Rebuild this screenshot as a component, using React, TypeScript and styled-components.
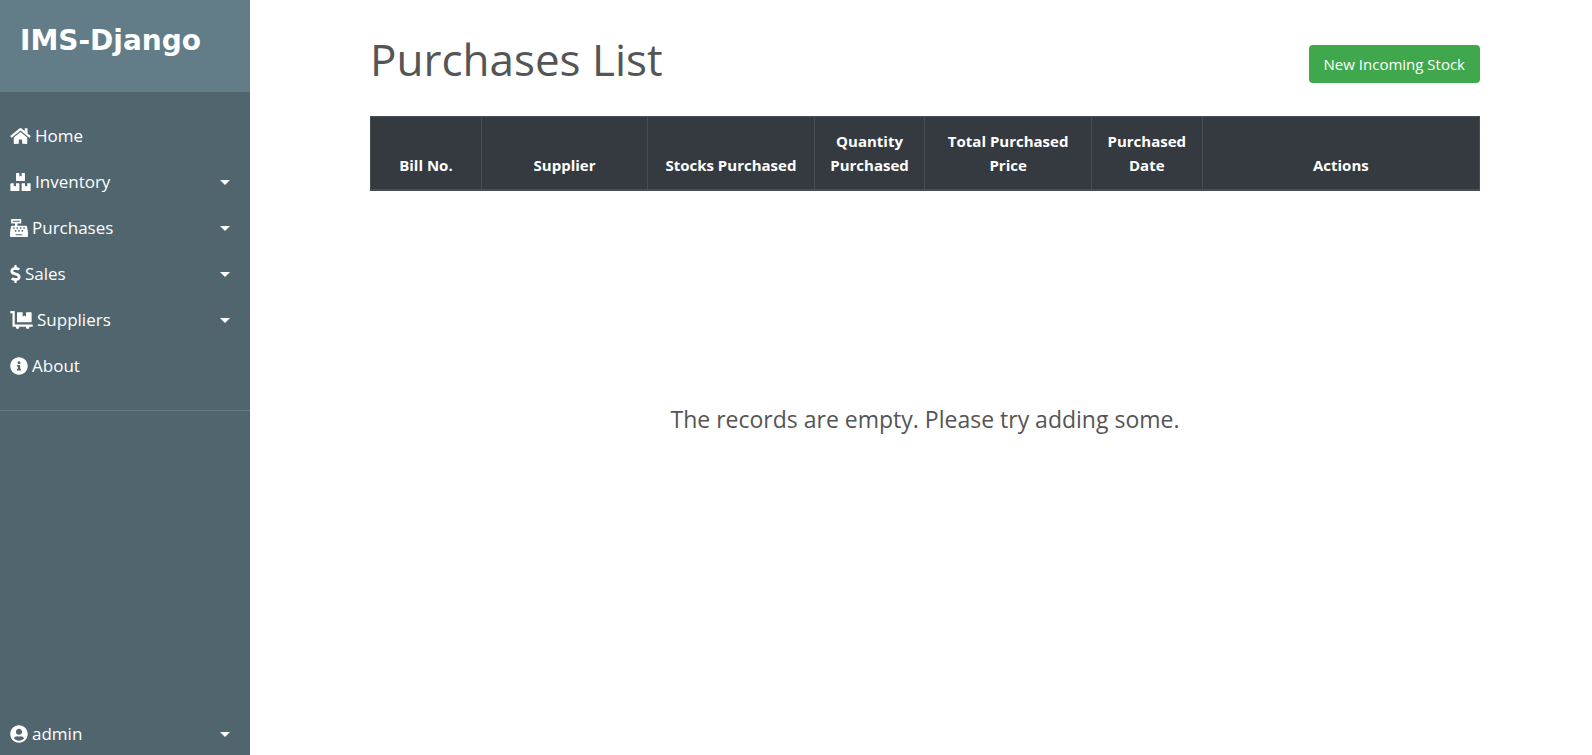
import React from 'react';
import styled, { createGlobalStyle, css } from 'styled-components';
import {
  FaHome,
  FaBoxes,
  FaCashRegister,
  FaDollarSign,
  FaDollyFlatbed,
  FaInfoCircle,
  FaUserCircle,
} from 'react-icons/fa';
import type { IconType } from 'react-icons';

const GlobalStyle = createGlobalStyle`
  *, *::before, *::after { box-sizing: border-box; }
  body {
    margin: 0;
    background: #fff;
    color: #555;
    font-family: "Segoe UI", "Open Sans", "Noto Sans", sans-serif;
    font-size: 16px;
    line-height: 24px;
  }
`;

const Page = styled.div`
  display: flex;
  min-height: 100vh;
`;

const Sidebar = styled.aside`
  display: flex;
  flex-direction: column;
  flex: 0 0 250px;
  background: #51656f;
  color: #fff;
`;

const Brand = styled.header`
  height: 92px;
  padding: 20px;
  background: #627d88;
`;

const BrandLink = styled.a`
  display: block;
  color: #fff;
  font-family: "DejaVu Sans", sans-serif;
  font-size: 28px;
  font-weight: 700;
  line-height: 42px;
  text-decoration: none;
  white-space: nowrap;
`;

const NavList = styled.ul`
  margin: 0;
  padding: 21px 0;
  list-style: none;
  border-bottom: 1px solid #627d88;
`;

const AccountArea = styled.div`
  margin-top: auto;
`;

const navItem = css<{ $compact?: boolean }>`
  display: flex;
  align-items: center;
  gap: 4px;
  width: 100%;
  padding: ${(p) => (p.$compact ? '8px' : '10px')} 20px ${(p) => (p.$compact ? '8px' : '10px')} 10px;
  border: 0;
  background: none;
  color: #fff;
  font: inherit;
  font-size: 17px;
  line-height: 26px;
  text-align: left;
  text-decoration: none;
  cursor: pointer;
`;

const NavLink = styled.a`
  ${navItem}
`;

const NavToggle = styled.button<{ $compact?: boolean }>`
  ${navItem}
`;

const IconSlot = styled.span<{ $width: number }>`
  display: flex;
  width: ${(p) => p.$width}px;

  svg {
    width: 100%;
    height: 18px;
  }
`;

const Caret = styled.span`
  margin-left: auto;
  border-top: 5px solid #fff;
  border-left: 5px solid transparent;
  border-right: 5px solid transparent;
`;

const Main = styled.main`
  flex: 1;
  min-width: 0;
  padding: 28px 16px 28px 24px;
`;

const Content = styled.div`
  max-width: 1110px;
  margin: 0 auto;
`;

const TitleBar = styled.div`
  display: flex;
  align-items: center;
  justify-content: space-between;
  margin-bottom: 26px;
`;

const Title = styled.h1`
  margin: 0;
  font-size: 44px;
  font-weight: 400;
  line-height: 62px;
`;

const PrimaryButton = styled.button`
  margin-top: 10px;
  padding: 7px 15px;
  border: 0;
  border-radius: 4px;
  background: #3fa84c;
  color: #fff;
  font: inherit;
  font-size: 15px;
  line-height: 24px;
  cursor: pointer;
`;

const Table = styled.table`
  width: 100%;
  table-layout: fixed;
  border-collapse: collapse;
  border: 1px solid #454d55;
`;

const HeadCell = styled.th<{ $width: number }>`
  width: ${(p) => p.$width}%;
  padding: 12px;
  border: 1px solid #454d55;
  border-bottom-width: 2px;
  background: #343a40;
  color: #fff;
  font-size: 15px;
  font-weight: 700;
  line-height: 24px;
  text-align: center;
  vertical-align: bottom;
`;

const EmptyMessage = styled.p`
  margin: 212px 0 0;
  font-size: 23px;
  line-height: 32px;
  text-align: center;
`;

interface NavEntry {
  label: string;
  icon: IconType;
  iconWidth: number;
  menu?: boolean;
}

const entries: NavEntry[] = [
  { label: 'Home', icon: FaHome, iconWidth: 21 },
  { label: 'Inventory', icon: FaBoxes, iconWidth: 21, menu: true },
  { label: 'Purchases', icon: FaCashRegister, iconWidth: 18, menu: true },
  { label: 'Sales', icon: FaDollarSign, iconWidth: 11, menu: true },
  { label: 'Suppliers', icon: FaDollyFlatbed, iconWidth: 23, menu: true },
  { label: 'About', icon: FaInfoCircle, iconWidth: 18 },
];

const columns = [
  { label: 'Bill No.', width: 10 },
  { label: 'Supplier', width: 15 },
  { label: 'Stocks Purchased', width: 15 },
  { label: 'Quantity Purchased', width: 10 },
  { label: 'Total Purchased Price', width: 15 },
  { label: 'Purchased Date', width: 10 },
  { label: 'Actions', width: 25 },
];

export default function App() {
  return (
    <>
      <GlobalStyle />
      <Page>
        <Sidebar>
          <Brand>
            <BrandLink href="#">IMS-Django</BrandLink>
          </Brand>
          <nav>
            <NavList>
              {entries.map(({ label, icon: Icon, iconWidth, menu }) => (
                <li key={label}>
                  {menu ? (
                    <NavToggle type="button" aria-expanded={false}>
                      <IconSlot $width={iconWidth}>
                        <Icon aria-hidden />
                      </IconSlot>
                      {label}
                      <Caret />
                    </NavToggle>
                  ) : (
                    <NavLink href="#">
                      <IconSlot $width={iconWidth}>
                        <Icon aria-hidden />
                      </IconSlot>
                      {label}
                    </NavLink>
                  )}
                </li>
              ))}
            </NavList>
          </nav>
          <AccountArea>
            <NavToggle type="button" aria-expanded={false} $compact>
              <IconSlot $width={18}>
                <FaUserCircle aria-hidden />
              </IconSlot>
              admin
              <Caret />
            </NavToggle>
          </AccountArea>
        </Sidebar>
        <Main>
          <Content>
            <TitleBar>
              <Title>Purchases List</Title>
              <PrimaryButton type="button">New Incoming Stock</PrimaryButton>
            </TitleBar>
            <Table>
              <thead>
                <tr>
                  {columns.map((c) => (
                    <HeadCell key={c.label} scope="col" $width={c.width}>
                      {c.label}
                    </HeadCell>
                  ))}
                </tr>
              </thead>
            </Table>
            <EmptyMessage>The records are empty. Please try adding some.</EmptyMessage>
          </Content>
        </Main>
      </Page>
    </>
  );
}
